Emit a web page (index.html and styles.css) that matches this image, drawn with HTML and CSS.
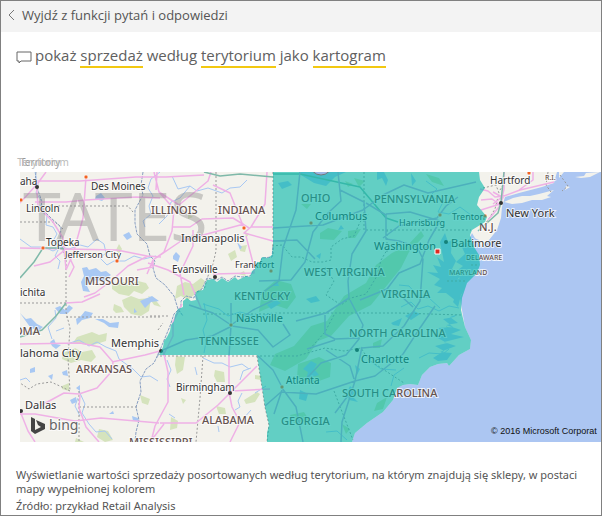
FILE: index.html
```html
<!DOCTYPE html>
<html lang="pl">
<head>
<meta charset="utf-8">
<meta name="viewport" content="width=device-width, initial-scale=1">
<title>Pytania i odpowiedzi</title>
<link rel="stylesheet" href="styles.css">
</head>
<body>
<div class="frame">
  <header class="topbar">
    <a class="back" href="#">
      <svg class="back-icon" viewBox="0 0 8 12" aria-hidden="true"><path d="M6 1 1 6l5 5"/></svg>
      <span>Wyjdź z funkcji pytań i odpowiedzi</span>
    </a>
  </header>
  <main>
    <div class="question">
      <svg class="chat-icon" viewBox="0 0 16 14" aria-hidden="true"><path d="M1 2h14v9H5l-2 2v-2H1z"/></svg>
      <p class="query">pokaż <span class="term">sprzedaż</span> według <span class="term">terytorium</span> jako <span class="term">kartogram</span></p>
    </div>
    <figure class="visual">
      <div class="field"><span>Territory</span><span class="field-ghost">Terytorium</span></div>
      <svg class="map" viewBox="20 172 581 270" role="img" aria-label="Kartogram">
        <rect class="sea" x="20" y="172" width="581" height="270"/>
        <path class="land" d="M20 172H557L554 183 542 187 519 193 505 197 502 207 501 218 497 230 489 240 482 248 479 240 474 238 477 249 481 257 480 265 477 273 467 283 460 298 462 310 465 327 471 340 470 349 459 355 449 366 447 363 438 364 430 367 422 375 418 385 410 384 403 385 397 388 393 400 383 412 367 423 355 433 352 442H20z"/>
        <path class="land" d="M504 202l9-4 9-2 8 0 9-2 15-4-7 6 4 1-9 3-10 0-10 3-10 1zM566 186l4 1-5 3zM575 177l9-1 2-3 14-1-10 5-9 1zM559 172h5l-5 6z"/>
        <g class="forest">
          <path d="M112 284l12-2 4 3 10-4 8 2 3 5-7 6-8-3-5 5-10-2-7-5zM122 300l9-4 8 3 12-1-2 13-8 5-10-2-7-7zM77 337l15-5 7 3 8-2-1 8-13 4-12-1-9 0zM63 353l12-5 7 4 10-2 4 7-5 5-10-2-10 3-9-4zM114 304l7 3 3 5-8 1-3-3zM62 386l7-3v8l-7-2zM140 395l10 4-2 6-6-2zM99 429l9 2 5 9-8 2-8-5zM76 438l8 4h-9zM176 356l9 1-2 13-6 4-2-9zM215 370l9 2 1 10-8 0-3-6zM216 406l9 2 1 6-7 0zM244 400l13-8 3 2-5 8-9 2zM171 417l7 4-1 7-7 2zM181 398l5 2-3 4zM255 375l7 1-1 4-6-1z"/>
          <path d="M177 286l8-4 8 2 8-6 4 3-4 10-7 4-6 5-7-4-6 3zM228 254l7-4 2 7-6 4zM241 246l6-1-2 7-5-1zM238 274l6-3 2 5zM148 296l6 2 7 9-7-2zM188 214l5 3-5 2zM116 250l3-6 3 5-3 5zM245 232l4 2-3 4z"/>
        </g>
        <g class="woods">
          <path d="M392 253l16-8 13-14 3 5-15 16-8 16-17 21-13 16-22 11-18 20-13 5-12 18-21 12-15-6 5-11 19-8 17-20 16-5 17-25 22-13 10-18zM262 292l14-12 15 4 5 13-9 12-12-4-16 7zM320 233l8-5 14 3-8 9-14-1zM348 231l13-2-6 9-7 0zM298 364l21-7 12 6-1 14-19 7-14-6zM373 343l9-4-2 9-7 0zM377 403l10-6-4 12-9 2zM290 415l14-3 5 8-15 3zM354 178l11 3-6 6zM426 174l13 4 5 8-12-4zM301 204l10 0-4 5zM342 424l8 5-4 5zM446 326l8 5-5 4zM345 181l8 3-5 3z"/>
        </g>
        <g class="water">
          <path d="M96 196l5-3 4 5-3 3-7-2zM82 268l5-1 2 3 7-2 5 4 5-1 5 4-4 3-3 5-7-3-6 2-4 4 3 6-7-1-2-9 3-6zM123 235l6-3 3 5-5 3zM76 319l5-3 4-5 8 2-3 5-8 2-5 5zM95 319l8 0 7 4 9-1-1 6-9-1-5-4zM20 313l6 6 5-1 6 6 6 3-5 4-8-4zM55 308l5-2 5 4 4-5 4 3-6 6-7 0zM50 342l4-3 2 5 5 1-5 4-4-3zM140 301l12-5 7 5-8 1-6 6zM30 369l5-2 0 5-5 1zM48 376l5-2-1 6zM62 372l5-2 1 6-5-1zM76 388l4-3 0 6zM70 400l6-3 1 5-5 2zM109 414l4-3 1 3zM132 416l6 2 1 3-6 0zM173 256l3-4 4 4-2 6-5-3zM237 242l5 5-2 3zM134 308l3 4-3 1z"/>
          <path d="M278 183l10-2 4 4-10 4zM301 172h45l-11 5-9 9-12-3-13-8zM377 172h7l4 8-2 6-4-8-5 2zM411 173l5 8-4 5zM440 242l5-9 3 9 4-2-1 13 5 8-4 8 9 5-6 10 5 6-4 11-10-8-9 0 5-5-8-3 6-6-13-7 11 1-5-8 8 2-4-10 7 5z"/>
          <path d="M472 233l7 12 7 10-5 14-10 11-10 15-3 12-5-5 5-12-9-5 11-7-7-4 10-8-7-4 9-8-4-9 7-3zM458 314l-8 3 8 6-12 2 15 5-10 4 13 3-20 5 12 4-16 6 12 1-5 7-9 1-5-3 11-7-9-5 12-3-13-7 12-2-8-6 15-1-10-8 11-2z"/>
          <path d="M273 286l4-5 2 5zM316 256l5-3-1 6zM306 299l10-3 4 5-9 2zM341 225l-3 5 6-1zM311 361l6 3-3 5 5 6-7 2 1 5-7-3 2-7-5-3zM300 390l8 4-2 7-7-2zM355 365l5 4-3 6zM350 386l7 6-5 4 6 6-9-2-2-8zM405 316l9-5 6 3-9 6zM391 323l11-5-3 8-6-1zM267 305l9-5 5 3-10 6z"/>
        </g>
        <g class="rivers">
          <path d="M35 172l3 13-2 8 6 8-2 9 7 6-1 9 7 2 4 7-4 7 6 7-4 8 5 5-2 8"/>
          <path d="M20 239l11 8 13 0 9 4 8-4 8 2 11-4 8 2 9-8 7 5 2 9-6 5 7 7 7-4 11 0 9-5 10 3 12-3"/>
          <path d="M160 172l-9 7-3 9 5 8-4 10 2 8-8 7 2 6"/>
          <path d="M172 176l6 13 12-3 7 5 11-3 14 5 8-5 10-1 7-7M190 186l-10 12-9 4-4 14-8 8"/>
          <path d="M67 344l12-4 10 6 8-4 9 5 10 4 3 8 14 10 8 8 9-1 8 5M79 391l6 13-3 9 7 11 7 8 9-1 7 8M20 380l6-2 4 4M52 339l-4-12 8-9-1-8M64 328l-8 3M78 398l-3 8 5 10"/>
          <path d="M203 358l11 5 8 0 8 4 12-3 7 5M240 380l3-9 8-3M242 393l-4 8 2 6-5 3M167 360l4 10-4 9 3 8M195 367l2 8M251 410l-8 9M218 426l1 6M169 414l6 4M266 386l-11 7"/>
          <path d="M401 307l10-5 7 7 10-3 11 5 10-5 10 2M419 358l10-5 14 1 6-5M426 181l11 8-7 7 13 6-5 10 11 2 11-7 11 8M391 386l3-11 10-7M370 361l11 8 15 1M399 285l10 1 9 10 11 2 11 10M326 432l11-1 10 9M204 303l3 17-4 10 3 12-2 11M203 304l16 5 9 7 12-4 18 5 14-4"/>
        </g>
        <g class="borders">
          <path d="M50 206h78l5 6M20 222h35l8 7M66 260v52l4 16-2 30 2 33M66 317h94M20 303h46M79 407h60M79 391v51M70 391l-8-4-11-5-14 2-8 5-9-6M150 316h20M158 330l5-7M216 172v79l-3 13-5 12-4 14M203 356l-3 42-4 44M257 356l5 31 3 20 4 18-2 17M160 356h137l28-8 19 3 17-3 8 12 35 23M203 314h63l13-1h120l62 2M364 172v58h107M387 230v23M273 172v84M272 246l10-1 10 12 9 0 11 5 11 0 8-2 0-13 11-8 12-3 6-14 9-8M325 267l9 14-8 14 15 10 10-7 15-4 11-18 4-16 6-10 15-5M471 265h8M334 315l-9 17-17 19M334 391l19 49M483 188l13-3 3 8-4 16-9 14M500 190l5-8M548 172l-2 13 5 7M560 175l8 11-6 5M170 171h180M447 281h20"/>
        </g>
        <g class="main-rivers">
          <path d="M143 172l-2 13 2 10-8 15 0 13 2 11 10 10 3 12 5 5-2 7 3 10 9 7 9 11 4 13 5 7"/>
          <path d="M36 172l-1 10 6 17 1 10 9 9 10 9-1 14 4 12"/>
          <path d="M159 352l-5 11-8 6-6 12 1 11-5 15 3 13-3 12-1 10M273 247l-1 10-10 1-2 5-5 6-5 7-8 1-7-1-7 5-6-4-5 3-10-2-5 11-7 4-1 5-8-2-5 5v6l-7 7-4 12-5 12-5 12-3 8"/>
        </g>
        <g class="roads">
          <path d="M20 203l18-20 8-11M35 202h31l20-2 50-3 24 1M36 180l2 26 15 16 10 16 3 31M86 177l-3 41-10 36-7 16M20 248l46 1 51 1 30 6 14 1M66 249l-16 13-16 4M66 250l8 17-5 10M84 297l11-4 16-12 17-15 20-10"/>
          <path d="M36 181h44l56-4h30l38-2M154 172l5 20 20 13 29-24 3-9M159 192l15 17-2 22-8 21-11 8-6 14M172 227h18l12-8 31-1 16 10M193 230v16l-13 27 4 22M153 260l28-19 63-17M213 185l17 8 14 35M267 172l-2 32-14 23-7 6 29 8M251 227l22 0M246 236l7 27 1 10-41 1M153 260l0 7-16 3M148 263l20 7 22 12 11 26M157 172l-1 18"/>
          <path d="M20 344l60-1 20 4 13 15-1 9-15 17-18 6-15-1-24 13M112 362l33-7 15-4M20 414l15 0 40 7 26-3 58 5M80 395l-1 13 7 19 13 15M20 411l8 20 7 11M163 350l5 22 0 30-13 24-4 16M160 423h36l22-18 14-14 25-25M229 356l0 36 3 15 8 15-10 20M232 391l19-1 19-1M150 442l14-18M182 304l-9 18 0 14-10 20M66 303l16-1 18-8"/>
          <path d="M480 189l8 2 7 6 9-1 16-6 34-8M481 200l11-1 7 5M481 210l19-6M500 206l4-17 0-17M493 192l9 5-9 7M504 195l-5 12-11 13M519 190l14-10 0-8"/>
        </g>
        <g class="toll"><path d="M20 278l14-16 9-14 14 0 7 1M20 337l22-7 14-14 10-13M204 172l16 4 20-2 33 3M273 174h27l60 13 26 31 12 4M504 172l-3 30-3 11-20 18"/></g>
        <g class="covered-roads">
          <path d="M273 228l50-3 40-15 20-15 21-10 24 8 48-11M273 241l24-1 18 19M300 172l-4 38-13 38-4 33-20 14M338 172l3 29-13 12-15 19-8 30-14 18-32 1M340 190l24 12 2 29-14 23-4 27 1 17-23 15-30 8M366 203l20 12 0 24 13 2 18 6 6 12M383 238l16-12 38-8 9-12 12-9M386 214l24-2 30 9M440 221l-11 19-9 24-21 9-12 16-27 11M423 259l-3 42-16 25-21 20-21 2M387 289l14 7 12 11M350 300l13 25-4 14-13 16-25 8-16 17M362 347l-7 34-39 13-35-2-16 14M355 381l20-5 28-22 17-26 15-22M355 381l-13 41-1 20M282 388l14 19 7 35M258 356l15 14 9 17M163 350l23-10 26-4 20-10 26 4 15 17 17-12-7-11M231 303v23l-2 30M231 325l22-15 25-12M231 325l-18-12-24-8M282 390l-8 24M325 315l0 19 10 5 24-1M307 349l28-9M326 350l24 16 4 13M350 393l-15 20"/>
        </g>
        <text class="country" x="23" y="241">TATES</text>
        <g class="state">
          <text x="151" y="214">ILLINOIS</text><text x="218" y="214">INDIANA</text>
          <text x="85" y="285">MISSOURI</text><text x="14" y="335">OMA</text>
          <text x="76" y="373">ARKANSAS</text><text x="202" y="424">ALABAMA</text>
          <text x="129" y="446">MISSISSIPPI</text><text x="301" y="202">OHIO</text>
          <text x="374" y="203">PENNSYLVANIA</text><text x="304" y="276">WEST VIRGINIA</text>
          <text x="381" y="298">VIRGINIA</text><text x="234" y="300">KENTUCKY</text>
          <text x="199" y="345">TENNESSEE</text><text x="349" y="337">NORTH CAROLINA</text>
          <text x="342" y="397">SOUTH CAROLINA</text><text x="281" y="425">GEORGIA</text>
          <text x="479" y="231">N.J.</text>
        </g>
        <g class="state minor"><text x="466" y="260">DELAWARE</text><text x="449" y="275">MARYLAND</text><text x="545" y="180">R.I.</text></g>
        <g class="city major">
          <text x="181" y="242">Indianapolis</text><text x="111" y="347">Memphis</text>
          <text x="20" y="357">lahoma City</text><text x="25" y="409">Dallas</text>
          <text x="315" y="220">Columbus</text><text x="374" y="250">Washington</text>
          <text x="451" y="247">Baltimore</text><text x="506" y="217">New York</text>
          <text x="236" y="322">Nashville</text><text x="361" y="363">Charlotte</text>
        </g>
        <g class="city">
          <text x="91" y="190">Des Moines</text><text x="26" y="212">Lincoln</text>
          <text x="20" y="185">aha</text><text x="46" y="246">Topeka</text>
          <text x="20" y="296">ichita</text><text x="172" y="273">Evansville</text>
          <text x="176" y="391">Birmingham</text><text x="490" y="184">Hartford</text>
          <text x="286" y="384">Atlanta</text>
        </g>
        <g class="city small">
          <text x="65" y="258">Jefferson City</text><text x="235" y="268">Frankfort</text>
          <text x="399" y="226">Harrisburg</text><text x="452" y="220">Trenton</text>
        </g>
        <g class="capital"><circle cx="86" cy="177" r="2"/><circle cx="21" cy="200" r="2"/><circle cx="43" cy="248" r="2"/><circle cx="117" cy="261" r="2"/><circle cx="244" cy="228" r="2"/><circle cx="271" cy="271" r="2"/><circle cx="311" cy="223" r="2"/><circle cx="440" cy="215" r="2"/><circle cx="485" cy="216" r="2"/><circle cx="529" cy="173" r="2"/><circle cx="231" cy="325" r="2"/><circle cx="282" cy="387" r="2"/></g>
        <g class="town"><circle cx="37" cy="187" r="2"/><circle cx="215" cy="277" r="2"/><circle cx="161" cy="351" r="2"/><circle cx="230" cy="393" r="2"/><circle cx="446" cy="242" r="2"/><circle cx="501" cy="203" r="2"/><circle cx="357" cy="350" r="2"/><circle cx="21" cy="411" r="2"/></g>
        <path class="region" d="M273 172V245L272 255 268 258 262 257 260 262 257 262 255 269 252 271 250 277 246 276 242 278 238 280 235 277 228 282 222 278 217 282 213 279 207 280 205 284 203 290 197 291 195 295 196 300 191 301 187 298 183 301 183 307 178 309 175 315 174 321 171 325 170 331 167 337 164 341 163 347 159 355H257L262 387 265 407 269 425 267 433V442H352L355 433 367 423 383 412 393 400 397 388 403 385 410 384 418 385 422 375 430 367 438 364 447 363 449 366 459 355 470 349 471 340 465 327 461 310 462 298 467 283 477 273 480 265 479 255 474 247 470 235 472 230 485 222 487 217 482 211 477 205 479 197 485 188 480 180 479 172z"/>
        <path class="washington" d="M435 249h5v5h-5z"/>
        <circle class="bubble" cx="321" cy="164" r="11"/>
        <path class="bing-mark" d="M31 417l4 2v11l6-3-3-2-2-5 9 4v5l-10 5-4-3z"/>
        <text class="bing" x="49" y="430">bing</text>
        <text class="copyright" x="491" y="434">© 2016 Microsoft Corporat</text>
      </svg>
      <figcaption class="caption">
        <p>Wyświetlanie wartości sprzedaży posortowanych według terytorium, na którym znajdują się sklepy, w postaci mapy wypełnionej kolorem</p>
        <p>Źródło: przykład Retail Analysis</p>
      </figcaption>
    </figure>
  </main>
</div>
</body>
</html>
```
FILE: styles.css
```css
* { box-sizing: border-box; }
body {
  margin: 0;
  background: #fff;
  color: #555;
  font-family: "Noto Sans", "Open Sans", sans-serif;
}
p, figure { margin: 0; }
.frame { min-height: 100vh; border: 1px solid #808080; }
.topbar { display: flex; height: 31px; padding: 0 7px; background: #f3f3f3; }
.back {
  display: flex;
  align-items: center;
  gap: 6px;
  color: #555;
  font-family: "Open Sans", "Noto Sans", sans-serif;
  font-size: 13px;
  line-height: 20px;
  text-decoration: none;
  height: 27px;
}
.back-icon { width: 8px; height: 12px; fill: none; stroke: #777; }
.question { display: flex; align-items: center; gap: 3px; padding: 13px 15px 0; }
.chat-icon { width: 16px; height: 14px; fill: none; stroke: #666; }
.query { color: #606060; font-family: "Open Sans", "Noto Sans", sans-serif; font-size: 15px; line-height: 21px; }
.term { display: inline-block; border-bottom: 2px solid #f2c811; }
.field { display: flex; margin-top: 84px; padding-left: 19px; color: #999; font-size: 10px; line-height: 20px; }
.field span { flex: none; }
.field-ghost { margin-left: -43px; color: #bbb; }
.map { display: block; width: calc(100% - 19px); height: auto; margin-left: 19px; font-family: "Noto Sans", "Open Sans", sans-serif; }
.caption { padding: 26px 15px 0; font-size: 11px; line-height: 14px; }
.caption p + p { margin-top: 3px; }

.sea { fill: #acc6f2; }
.land { fill: #f3f2ec; }
.forest { fill: #d5e3bd; }
.woods { fill: #cbe0b0; }
.water { fill: #a8c8f3; }
.rivers, .borders, .main-rivers, .roads, .toll, .covered-roads { fill: none; stroke-linejoin: round; }
.rivers { stroke: #a8c8f3; stroke-width: 1; }
.borders { stroke: #999; stroke-dasharray: 2 2; }
.main-rivers { stroke: #899fc2; stroke-width: 1; stroke-dasharray: 3 1; }
.roads { stroke: #efb1e6; stroke-width: 1.5; }
.covered-roads { stroke: #bba5d8; stroke-width: 1.5; }
.toll { stroke: #7fb9a9; stroke-width: 1.5; }
.country { fill: #777; fill-opacity: .35; font-size: 68px; }
.state, .city, .bing { paint-order: stroke; stroke: #fff; stroke-opacity: .7; stroke-width: 2px; }
.state { fill: #65524f; font-size: 11px; font-weight: 500; }
.minor { font-size: 7px; }
.city { fill: #333; font-size: 10px; }
.major { font-size: 11px; }
.small { font-size: 9px; }
.capital { fill: #f26322; stroke: #fff; stroke-opacity: .6; stroke-width: 1; }
.town { fill: #333; }
.region { fill: #01b8aa; fill-opacity: .6; }
.washington { fill: #e02b20; stroke: #fff; stroke-width: 1; }
.bubble { fill: #9db6e4; stroke: #777; }
.bing-mark { fill: #444; }
.bing { fill: #666; font-size: 14px; }
.copyright { fill: #111; font-family: "Liberation Sans", sans-serif; font-size: 9px; }
```
